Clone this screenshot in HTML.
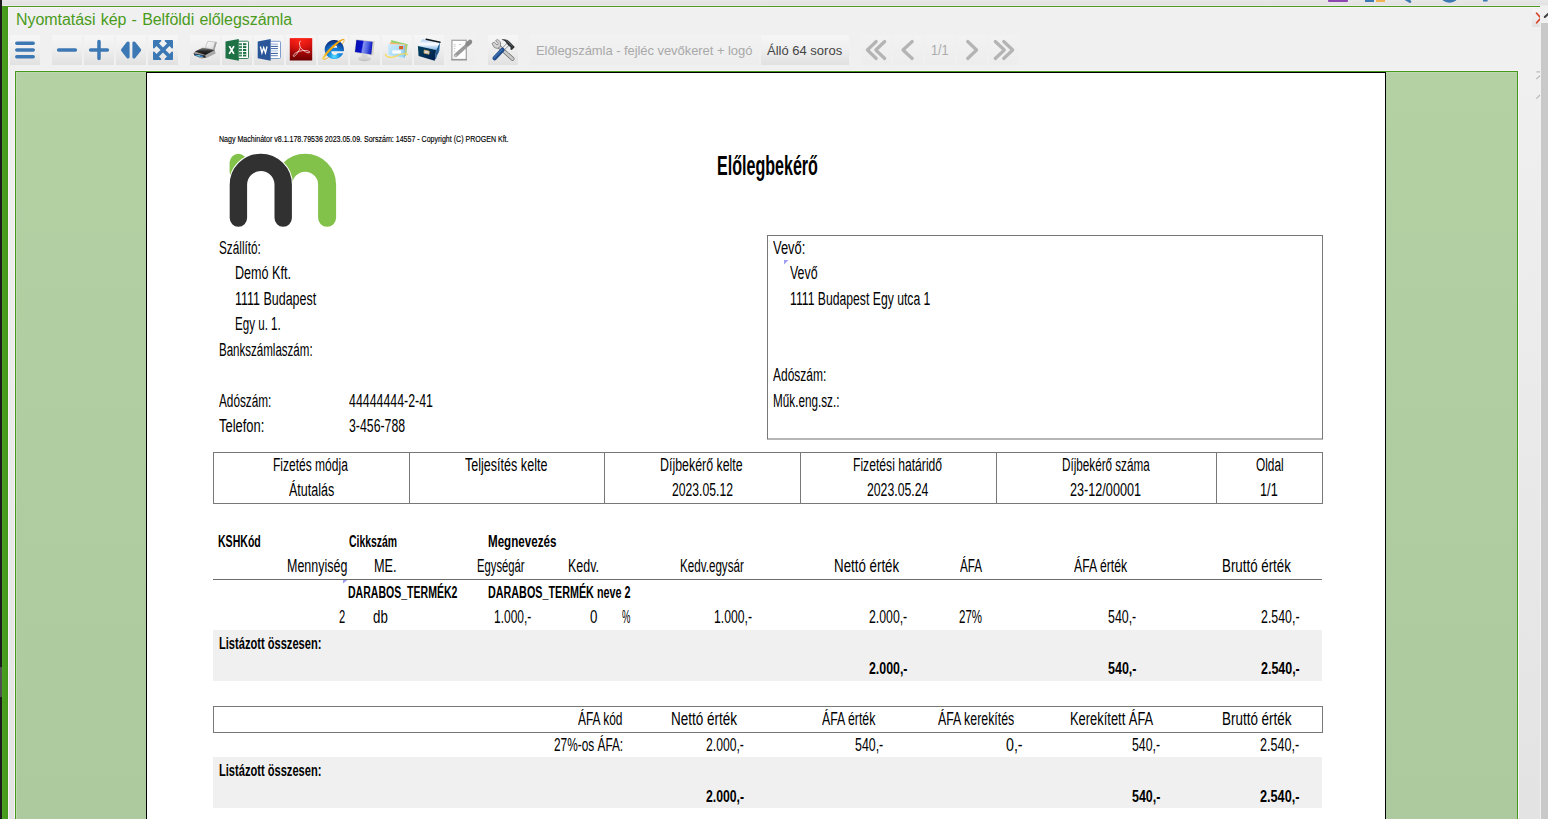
<!DOCTYPE html>
<html lang="hu"><head><meta charset="utf-8"><title>Nyomtatási kép - Belföldi előlegszámla</title>
<style>
html,body{margin:0;padding:0}
body{width:1548px;height:819px;overflow:hidden;position:relative;background:#f0f0f0;font-family:"Liberation Sans",sans-serif}
.a{position:absolute}
#topbar{left:0;top:0;width:1548px;height:6px;background:linear-gradient(#e8e8e8,#e2e2e2 80%,#f4f0f4)}
#lblack{left:0;top:0;width:2px;height:819px;background:#1c1c1c}
#lgrey{left:0;top:667px;width:2px;height:30px;background:#505050}
#lgreen{left:2px;top:6px;width:6px;height:813px;background:linear-gradient(90deg,#4ca522,#4a9c1e 20%,#489a1c 75%,#3d9613)}
#tgreen{left:2px;top:6px;width:1538px;height:1px;background:#4a9a1c}
#panel{left:8px;top:7px;width:1532px;height:812px;background:linear-gradient(#f0f0f0 0,#f0f0f0 64px,#e3e3e3 100%);box-shadow:inset 1px 1px 0 #f8f4f8}
#sbar{left:1541px;top:23px;width:7px;height:796px;background:#c9c9c9}
#sbtop{left:1540px;top:6px;width:8px;height:17px;background:#f0f0f0}
#title{left:16px;top:10px;font-size:16px;line-height:19px;color:#4b9b1d;white-space:nowrap;word-spacing:.9px;letter-spacing:-.06px}
.btn{position:absolute;top:35px;width:30px;height:30px;background:linear-gradient(#f6f6f6,#efefef 45%,#e1e1e1)}
.btn svg{position:absolute;left:0;top:0}
#lbl{left:536px;top:43px;font-size:13px;line-height:15px;color:#a9a9a9;white-space:nowrap;letter-spacing:-.06px}
#allo{left:761px;top:35px;width:88px;height:30px;background:linear-gradient(#f6f6f6,#efefef 45%,#e1e1e1)}
#allo span{position:absolute;left:6px;top:8px;font-size:13px;line-height:15px;color:#444;white-space:nowrap}
#pg{left:931.4px;top:42.6px;font-size:14px;line-height:15px;color:#ababab;transform:scaleX(.9);transform-origin:0 0}
#prevline{display:none}
#preview{left:15px;top:71px;width:1503px;height:748px;box-sizing:border-box;border:1px solid #45981a;border-bottom:none;background:linear-gradient(#b3d1a3,#adc99e);box-shadow:-1px -1px 0 #f8f3fa,1px -1px 0 #f8f3fa,inset 1px 1px 0 #bdd8af}
#page{left:146px;top:72px;width:1240px;height:747px;box-sizing:border-box;border:1px solid #000;border-bottom:none;background:#fff}
.box{position:absolute;box-sizing:border-box;border:1px solid #787878}
.vl{position:absolute;width:1px;background:#787878}
.band{position:absolute;background:#f0f0f0}
.fb{position:absolute;top:35px;height:30px;background:linear-gradient(#f2f2f2,#f0f0f0 45%,#ededed)}

.t{position:absolute;white-space:nowrap;font-family:"Liberation Sans",sans-serif;font-size:18px;line-height:18px;color:#000;transform-origin:0 0}
.t.b{font-weight:bold;font-size:16px;line-height:16px}
</style></head><body>
<div class="a" id="topbar"></div>
<div class="a" id="panel"></div>
<div class="a" id="lgreen"></div>
<div class="a" id="tgreen"></div>
<div class="a" id="lblack"></div>
<div class="a" id="lgrey"></div>
<div class="a" id="sbtop"></div>
<div class="a" id="sbar"></div>
<div class="a" id="title">Nyomtatási kép - Belföldi előlegszámla</div>
<div class="fb" style="left:530px;width:229px"></div>
<div class="fb" style="left:861px;width:30px"></div>
<div class="fb" style="left:893px;width:30px"></div>
<div class="fb" style="left:925px;width:30px"></div>
<div class="fb" style="left:957px;width:30px"></div>
<div class="fb" style="left:989px;width:30px"></div>
<!--TOOLBAR-->
<!-- group 1: blue vector icons -->
<div class="btn" style="left:10px"><svg width="30" height="30" viewBox="0 0 30 30"><g stroke="#3c78b4" stroke-width="3.5" stroke-linecap="round"><path d="M6.8 8.3H23.2M6.8 15H23.2M6.8 21.8H23.2"/></g></svg></div>
<div class="btn" style="left:52px"><svg width="30" height="30" viewBox="0 0 30 30"><path d="M6.6 15H23.4" stroke="#3c78b4" stroke-width="3.5" stroke-linecap="round"/></svg></div>
<div class="btn" style="left:84px"><svg width="30" height="30" viewBox="0 0 30 30"><path d="M6.6 15H23.4M15 6.6V23.4" stroke="#3c78b4" stroke-width="3.5" stroke-linecap="round"/></svg></div>
<div class="btn" style="left:116px"><svg width="30" height="30" viewBox="0 0 30 30"><g fill="#3c78b4" stroke="#3c78b4" stroke-width="3.2" stroke-linejoin="round"><path d="M6.6 15L12 8.1V21.9Z"/><path d="M23.6 15L18 8.1V21.9Z"/></g></svg></div>
<div class="btn" style="left:148px"><svg width="30" height="30" viewBox="0 0 30 30"><g fill="#3c78b4" stroke="#3c78b4" stroke-width="1.6" stroke-linejoin="round"><path d="M5.8 5.8H12.6L5.8 12.6Z"/><path d="M24.2 5.8H17.4L24.2 12.6Z"/><path d="M5.8 24.2H12.6L5.8 17.4Z"/><path d="M24.2 24.2H17.4L24.2 17.4Z"/></g><path d="M8 8L22 22M22 8L8 22" stroke="#3c78b4" stroke-width="3.6"/></svg></div>

<!-- printer -->
<div class="btn" style="left:190px"><svg width="30" height="30" viewBox="0 0 30 30"><defs><linearGradient id="pr1" x1="0" y1="0" x2="0" y2="1"><stop offset="0" stop-color="#8a8a8a"/><stop offset=".45" stop-color="#2a2a2a"/><stop offset="1" stop-color="#111"/></linearGradient><linearGradient id="pr2" x1="0" y1="0" x2="1" y2="1"><stop offset="0" stop-color="#fff"/><stop offset="1" stop-color="#d4d4d4"/></linearGradient></defs>
<path d="M17.8 6.3L26.6 7.2L23.4 14.6L15.2 12.6Z" fill="url(#pr2)" stroke="#b4b4b4" stroke-width=".7"/>
<path d="M24.9 7.3L26.7 7.4L24.6 14.9L22.9 14.5Z" fill="#a2a2a2"/><path d="M3.4 18.3L5.2 16.2L12.8 12.7L24.8 15.1L25.4 18.6L16.3 22.8L9 22.3L4.8 20.8Z" fill="#9a9a9a"/>
<path d="M5 16.4L12.8 12.8L24.6 15.1L15.5 20.1Z" fill="url(#pr1)"/>
<path d="M3.6 18.4L15.4 20.6L15.6 22.9L4.8 20.8Z" fill="#2b2b2b"/>
<path d="M5.4 19.4L12.9 20.7L12.6 22.2L5.2 20.8Z" fill="#3b8ee6"/><path d="M7.6 20L10.2 20.5L10 21.5L7.4 21Z" fill="#7fe0d0"/>
<path d="M15.6 20.3L24.9 15.4L25.4 18.6L16.3 22.8Z" fill="#a9a9a9"/><path d="M8.6 22.2L13 22.8L12.8 23.4L8.8 22.9Z" fill="#8d8d8d"/></svg></div>
<!-- excel -->
<div class="btn" style="left:222px"><svg width="30" height="30" viewBox="0 0 30 30"><rect x="15.5" y="6.2" width="11" height="17.3" rx="1" fill="#fff" stroke="#21734a" stroke-width=".9"/>
<g fill="#1e7145"><rect x="21" y="8.2" width="3.3" height="2"/><rect x="21" y="11.1" width="3.3" height="2"/><rect x="21" y="14" width="3.3" height="2"/><rect x="21" y="16.9" width="3.3" height="2"/><rect x="21" y="19.6" width="3.3" height="1.9"/></g>
<g fill="#3f8a62"><rect x="17" y="8.2" width="3" height="2"/><rect x="17" y="11.1" width="3" height="2"/><rect x="17" y="14" width="3" height="2"/><rect x="17" y="16.9" width="3" height="2"/><rect x="17" y="19.6" width="3" height="1.9"/></g>
<path d="M3.5 6.4L16.8 3.9V25.8L3.5 23.3Z" fill="#1e7145"/>
<path d="M7.3 11.1L11.9 18.9M12 11.1L7.2 18.9" stroke="#fff" stroke-width="1.7"/></svg></div>
<!-- word -->
<div class="btn" style="left:254px"><svg width="30" height="30" viewBox="0 0 30 30"><rect x="15.5" y="6.3" width="11" height="17.2" rx="1" fill="#fff" stroke="#7d9bcd" stroke-width="1"/>
<g stroke-width="1"><path d="M16.7 9.1H23.9" stroke="#8ba6d2"/><path d="M16.7 11.4H23.9" stroke="#2a5699"/><path d="M16.7 13.6H23.9" stroke="#3f68a8"/><path d="M16.7 15.9H23.9" stroke="#a9bde0"/><path d="M16.7 18.4H23.9" stroke="#2a5699"/><path d="M16.7 20.7H23.9" stroke="#5d80ba"/></g>
<path d="M3.7 6.4L16.7 3.9V25.8L3.7 23.3Z" fill="#2a5699"/>
<path d="M6.4 11.5L7.95 17.8L9.7 12.6L11.45 17.8L13 11.5" fill="none" stroke="#fff" stroke-width="1.35" stroke-linejoin="miter"/></svg></div>
<!-- pdf -->
<div class="btn" style="left:286px"><svg width="30" height="30" viewBox="0 0 30 30"><defs><linearGradient id="pd1" x1="0" y1="0" x2="0" y2="1"><stop offset="0" stop-color="#ea1010"/><stop offset=".5" stop-color="#b80a0a"/><stop offset="1" stop-color="#6c0000"/></linearGradient><radialGradient id="pd2" cx=".45" cy="0" r=".7"><stop offset="0" stop-color="#ff2a1a" stop-opacity=".9"/><stop offset="1" stop-color="#ff2a1a" stop-opacity="0"/></radialGradient></defs>
<rect x="3.8" y="3.2" width="22.4" height="22.3" fill="url(#pd1)"/><rect x="3.8" y="3.2" width="22.4" height="22.3" fill="url(#pd2)"/>
<path d="M14.9 6.4C12.9 5.4 13.4 9.8 14.3 12.4C13 16 9.6 21.6 7.6 21.4C6.2 20.6 9 17.6 13.2 16.3C17 15.1 22 15.2 23.6 16.7C24.4 18.2 21.4 18.2 19.4 16.8C17.2 15.2 15.2 13.6 14.3 12.4" fill="none" stroke="#fff" stroke-width=".8" stroke-opacity=".88"/></svg></div>
<!-- ie -->
<div class="btn" style="left:318px"><svg width="30" height="30" viewBox="0 0 30 30"><defs><radialGradient id="ie1" cx=".5" cy=".86" r=".9"><stop offset="0" stop-color="#5ce0ff"/><stop offset=".3" stop-color="#1690e4"/><stop offset=".62" stop-color="#0f62bc"/><stop offset=".88" stop-color="#0a3480"/><stop offset="1" stop-color="#06153f"/></radialGradient><linearGradient id="ie2" x1="0" y1="0" x2="1" y2="0"><stop offset="0" stop-color="#f7e36a"/><stop offset=".25" stop-color="#f3a90c"/><stop offset="1" stop-color="#eea212"/></linearGradient></defs>
<g transform="rotate(-43.5 15.6 14.4)"><ellipse cx="15.6" cy="14.4" rx="14.5" ry="2.9" fill="none" stroke="#eba51a" stroke-width=".7"/></g>
<circle cx="16.3" cy="14.5" r="9.3" fill="#f1efef"/><path d="M25.73 16.3A9.6 9.6 0 1 0 25.16 18.2H19.6A3.3 3 0 0 1 13.4 16.3ZM13.6 12.8A2.8 2.7 0 0 1 19.2 12.8Z" fill="url(#ie1)" fill-rule="evenodd"/>
<g transform="rotate(-43.5 15.6 14.4)"><path d="M.7 14.7A14.9 3.7 0 0 1 30.5 14.4A14.6 2.2 0 0 0 2.6 14.9A3 1.6 0 0 1 .7 14.7Z" fill="url(#ie2)"/></g></svg></div>
<!-- monitor -->
<div class="btn" style="left:350px"><svg width="30" height="30" viewBox="0 0 30 30"><defs><linearGradient id="mo1" x1="0" y1="0" x2="1" y2=".15"><stop offset="0" stop-color="#080ea8"/><stop offset=".44" stop-color="#0710cc"/><stop offset=".52" stop-color="#8492ec"/><stop offset=".78" stop-color="#4a5ee0"/><stop offset="1" stop-color="#0f1cc0"/></linearGradient><linearGradient id="mo2" x1="0" y1="0" x2="0" y2="1"><stop offset="0" stop-color="#e8e8e8"/><stop offset="1" stop-color="#bdbdbd"/></linearGradient></defs>
<ellipse cx="14.6" cy="23.5" rx="6.6" ry="2.8" fill="url(#mo2)"/><path d="M11.6 19L17.6 20.2L17.3 23H11.8Z" fill="#d4d4d4"/>
<path d="M6 4.2L23.3 6.2L24.6 6.1L23.4 20L21.7 20.6L4.3 17.5Z" fill="#d6d2c8"/>
<path d="M6.4 4.9L22.6 6.8L21.3 19.6L5 16.9Z" fill="url(#mo1)"/></svg></div>
<!-- mail -->
<div class="btn" style="left:382px"><svg width="30" height="30" viewBox="0 0 30 30"><defs><linearGradient id="ma1" x1="0" y1="0" x2="1" y2="1"><stop offset="0" stop-color="#cdeafc"/><stop offset="1" stop-color="#93d4f8"/></linearGradient></defs>
<path d="M9.1 5L25.6 9.3L24 20.9L9.1 17Z" fill="#93d472"/>
<path d="M7.8 7.2L24 9.5L22.9 21.7L7.8 18.6Z" fill="#f9b36f"/>
<path d="M6 9.3L22.7 9.9V22.9L6.2 20.2Z" fill="url(#ma1)" stroke="#d9f0fd" stroke-width=".5"/>
<path d="M22.3 10V22.8" stroke="#6fb0de" stroke-width=".8"/><rect x="17.1" y="11" width="4" height="3.3" rx=".5" fill="#e8521c"/><rect x="18.4" y="11.9" width="1.4" height="1.4" fill="#a8902a"/>
<rect x="10.3" y="15.3" width="8.7" height="3.3" fill="#fff" opacity=".92"/>
<path d="M3.4 19.2C4.6 22.6 9 23.2 14 21.2C18.5 19.3 23.4 17.2 25.6 19.6" fill="none" stroke="#f6d858" stroke-width="1.4" stroke-linecap="round" opacity=".9"/></svg></div>
<!-- archive -->
<div class="btn" style="left:414px"><svg width="30" height="30" viewBox="0 0 30 30"><defs><linearGradient id="ar1" x1="0" y1="0" x2="1" y2="1"><stop offset="0" stop-color="#00425f"/><stop offset="1" stop-color="#021d4c"/></linearGradient><linearGradient id="ar2" x1="0" y1="0" x2="0" y2="1"><stop offset="0" stop-color="#a9c9ee"/><stop offset=".45" stop-color="#fff"/><stop offset="1" stop-color="#7db4e6"/></linearGradient></defs>
<path d="M8.3 4.3L25.8 7L22.1 14.9L3.9 11Z" fill="url(#ar2)"/>
<path d="M12.2 4.3L26 7.2" stroke="#10181c" stroke-width="1.5" stroke-linecap="round"/>
<path d="M22.1 14.9L26.1 7.2L25.4 15.8L20.7 25.8Z" fill="#3f86cc"/><path d="M23.4 13.2L21.6 24M24.8 10.6L23.6 19" stroke="#0c2c44" stroke-width=".55"/>
<path d="M3.85 11L22.1 14.9L20.7 25.8L4.6 20.9Z" fill="url(#ar1)"/>
<path d="M10.2 15.1L15.2 16.2L15 19.2L10 18.1Z" fill="#d8d8dc" stroke="#dcae62" stroke-width=".8"/></svg></div>
<!-- edit (disabled) -->
<div class="btn" style="left:446px;background:linear-gradient(#f1f1f1,#eeeeee)"><svg width="30" height="30" viewBox="0 0 30 30"><rect x="5.9" y="5.3" width="14.4" height="19.2" fill="#fff" stroke="#a6a6a6" stroke-width="1.3"/><path d="M5.2 24.9H21" stroke="#8f8f8f" stroke-width="1"/>
<path d="M7.6 9.6H9.6M12.8 9.6H15M7.6 11.4H9.6M7.8 13.6H9.4M7.8 16.2H9.2" stroke="#b5b5b5" stroke-width=".7"/>
<path d="M24.2 7.4L9.6 20.4" stroke="#9a9a9a" stroke-width="3.6" stroke-linecap="round"/><path d="M24 6.8L21.6 8.9" stroke="#8a8a8a" stroke-width="4.4" stroke-linecap="round"/>
<path d="M9.8 19.2L6.6 22.9L11 21Z" fill="#c8c8c8"/></svg></div>
<!-- tools -->
<div class="btn" style="left:488px"><svg width="30" height="30" viewBox="0 0 30 30">
<path d="M10.6 11.2L24.4 23.8" stroke="#6d6d6d" stroke-width="4" stroke-linecap="round"/><path d="M10.6 11.2L24.4 23.8" stroke="#c9c9c9" stroke-width="2.6" stroke-linecap="round"/>
<path d="M4 8.6L6.2 7L9.2 10L10.4 8.8L7.6 5.6L9.6 4.4L12.6 7.2L12.4 11.4L9.6 13.4L6.4 12.6Z" fill="#d2d2d2" stroke="#777" stroke-width=".8" stroke-linejoin="round"/>
<path d="M20.6 8.8L13.6 15.8" stroke="#8a8a8a" stroke-width="3.4"/><path d="M20.6 8.8L13.6 15.8" stroke="#f4f4f4" stroke-width="2"/>
<path d="M14.6 14.8L6.6 23.2" stroke="#1f4d8c" stroke-width="4.2" stroke-linecap="round"/><path d="M14 14.6L6.2 22.6" stroke="#3c6cae" stroke-width="1.6" stroke-linecap="round"/>
<path d="M13.4 4.6C17.4 3.4 20.4 5.2 22.4 7.6L26.8 12L23.8 15L22.4 14.4L22.6 12.6L19 9C17.6 6.6 16 5.4 13.4 4.6Z" fill="#2e3134"/><path d="M18.4 5.4L24.6 11.4" stroke="#6a6e72" stroke-width=".9"/></svg></div>

<!-- nav arrows -->
<svg class="a" style="left:861px;top:35px" width="160" height="30" viewBox="0 0 160 30"><g fill="none" stroke="#b4b4b4" stroke-width="3.2" stroke-linecap="round" stroke-linejoin="round"><path d="M15.2 6.5L6.4 15L15.2 23.5M23.7 6.5L14.8 15L23.7 23.5"/><path d="M51.2 6.5L42 15L51.2 23.5"/><path d="M106.7 6.5L115.6 15L106.7 23.5"/><path d="M134.3 6.5L143.3 15L134.3 23.5M142.7 6.5L151.7 15L142.7 23.5"/></g></svg>

<div class="a" id="lbl">Előlegszámla - fejléc vevőkeret + logó</div>
<div class="a" id="allo"><span>Álló 64 soros</span></div>
<div class="a" id="pg">1/1</div>
<div class="a" id="preview"></div>
<div class="a" id="page"></div>
<svg class="a" style="left:225px;top:150px" width="116" height="82" viewBox="225 150 116 82"><g fill="none" stroke-linecap="round">
<path d="M238.4 162.6V172" stroke="#82c14a" stroke-width="17.6"/>
<path d="M283.2 184.7A21.95 21.95 0 0 1 327.1 184.7V217.8" stroke="#82c14a" stroke-width="18"/>
<path d="M238.4 218.1V184.8A22.4 22.4 0 0 1 283.2 184.8V218.1" stroke="#fff" stroke-width="19.6"/>
<path d="M238.4 218.1V184.8A22.4 22.4 0 0 1 283.2 184.8V218.1" stroke="#313131" stroke-width="17.4"/></g></svg>

<!-- customer box -->
<div class="box" style="left:767px;top:235px;width:556px;height:204px;border-bottom:none"></div>
<div class="a" style="left:767px;top:438px;width:556px;height:2px;background:rgba(120,120,120,.55)"></div>
<!-- table 1 -->
<div class="box" style="left:213px;top:452px;width:1110px;height:52px"></div>
<div class="vl" style="left:409px;top:452px;height:52px"></div>
<div class="vl" style="left:604px;top:452px;height:52px"></div>
<div class="vl" style="left:800px;top:452px;height:52px"></div>
<div class="vl" style="left:996px;top:452px;height:52px"></div>
<div class="vl" style="left:1216px;top:452px;height:52px"></div>
<!-- header rule -->
<div class="a" style="left:213px;top:579px;width:1109px;height:1px;background:#6c6c6c"></div>
<!-- bands -->
<div class="band" style="left:213px;top:630px;width:1109px;height:51px"></div>
<div class="band" style="left:213px;top:757px;width:1109px;height:51px"></div>
<!-- table 2 header -->
<div class="box" style="left:213px;top:706px;width:1110px;height:27px"></div>
<!-- fragments of the upper application toolbar -->
<div class="a" style="left:1328px;top:0;width:20px;height:2.4px;background:#8e47b0;border-radius:0 0 1px 1px"></div>
<div class="a" style="left:1365px;top:0;width:9px;height:2px;background:#3c78b4"></div>
<div class="a" style="left:1376px;top:0;width:9px;height:2px;background:#f0b352"></div>
<svg class="a" style="left:1400px;top:0" width="100" height="5" viewBox="1400 0 100 5"><path d="M1404.5 -1.6L1410 1.6" stroke="#3c78b4" stroke-width="2.6" stroke-linecap="round"/><path d="M1443 -2.6A6.5 4 0 0 0 1456 -2.6" fill="none" stroke="#3c78b4" stroke-width="2.6"/><path d="M1485.3 -1V1.5" stroke="#3c78b4" stroke-width="4.6"/></svg>
<!-- close button (clipped) -->
<div class="a" style="left:1532px;top:9px;width:8px;height:18px;background:linear-gradient(#f6f6f6,#efefef 45%,#e1e1e1)"></div>
<svg class="a" style="left:1532px;top:9px" width="8" height="18" viewBox="0 0 8 18"><path d="M4.6 4.2L9 9L4.6 13.8" fill="none" stroke="#d8432a" stroke-width="1.7" stroke-linecap="round"/></svg>
<!-- scrollbar arrow -->
<svg class="a" style="left:1541px;top:8px" width="7" height="14" viewBox="0 0 7 14"><path d="M3.8 9L8 5.2" fill="none" stroke="#404040" stroke-width="2" stroke-linecap="round"/></svg>
<!-- tiny clipped icons at right edge -->
<svg class="a" style="left:1534px;top:68px" width="6" height="36" viewBox="0 0 6 36"><g stroke="#b4b4b4" stroke-width="1.1" fill="none"><path d="M2.4 3.9H6"/><path d="M2.4 11L6 7.6"/><path d="M2.4 30.6L6 27"/></g></svg>
<!-- small marker ticks -->
<svg class="a" style="left:784px;top:260px" width="5" height="5"><path d="M0 0H4.4L0 4.4Z" fill="#9c9cf2"/></svg>
<svg class="a" style="left:343px;top:580px" width="5" height="4"><path d="M0 0H4.4L0 3.4Z" fill="#9c9cf2"/></svg>


<!-- document text -->
<div class="t" style="left:219.00px;top:238.8px;transform:scaleX(0.6537)">Szállító:</div>
<div class="t" style="left:234.80px;top:263.8px;transform:scaleX(0.6985)">Demó Kft.</div>
<div class="t" style="left:234.81px;top:289.8px;transform:scaleX(0.6934)">1111 Budapest</div>
<div class="t" style="left:234.86px;top:314.8px;transform:scaleX(0.6445)">Egy u. 1.</div>
<div class="t" style="left:218.66px;top:340.8px;transform:scaleX(0.6408)">Bankszámlaszám:</div>
<div class="t" style="left:219.30px;top:391.8px;transform:scaleX(0.6542)">Adószám:</div>
<div class="t" style="left:349.30px;top:391.8px;transform:scaleX(0.6880)">44444444-2-41</div>
<div class="t" style="left:219.30px;top:416.8px;transform:scaleX(0.7172)">Telefon:</div>
<div class="t" style="left:349.30px;top:416.8px;transform:scaleX(0.6837)">3-456-788</div>
<div class="t" style="left:773.00px;top:238.8px;transform:scaleX(0.7154)">Vevő:</div>
<div class="t" style="left:790.30px;top:263.8px;transform:scaleX(0.6871)">Vevő</div>
<div class="t" style="left:789.62px;top:289.8px;transform:scaleX(0.6777)">1111 Budapest Egy utca 1</div>
<div class="t" style="left:773.00px;top:365.8px;transform:scaleX(0.6656)">Adószám:</div>
<div class="t" style="left:773.15px;top:391.8px;transform:scaleX(0.6517)">Műk.eng.sz.:</div>
<div class="t" style="left:273.33px;top:456.1px;transform:scaleX(0.6677)">Fizetés módja</div>
<div class="t" style="left:288.80px;top:481.3px;transform:scaleX(0.6950)">Átutalás</div>
<div class="t" style="left:465.30px;top:456.1px;transform:scaleX(0.6980)">Teljesítés kelte</div>
<div class="t" style="left:660.31px;top:456.1px;transform:scaleX(0.6888)">Díjbekérő kelte</div>
<div class="t" style="left:671.50px;top:481.3px;transform:scaleX(0.6772)">2023.05.12</div>
<div class="t" style="left:853.13px;top:456.1px;transform:scaleX(0.6745)">Fizetési határidő</div>
<div class="t" style="left:867.05px;top:481.3px;transform:scaleX(0.6805)">2023.05.24</div>
<div class="t" style="left:1062.00px;top:456.1px;transform:scaleX(0.6494)">Díjbekérő száma</div>
<div class="t" style="left:1070.00px;top:481.3px;transform:scaleX(0.7024)">23-12/00001</div>
<div class="t" style="left:1255.50px;top:456.1px;transform:scaleX(0.6582)">Oldal</div>
<div class="t" style="left:1259.79px;top:481.3px;transform:scaleX(0.7080)">1/1</div>
<div class="t b" style="left:218.14px;top:533.6px;transform:scaleX(0.6592)">KSHKód</div>
<div class="t b" style="left:349.00px;top:533.6px;transform:scaleX(0.6522)">Cikkszám</div>
<div class="t b" style="left:487.77px;top:533.6px;transform:scaleX(0.7251)">Megnevezés</div>
<div class="t" style="left:286.91px;top:556.6px;transform:scaleX(0.6938)">Mennyiség</div>
<div class="t" style="left:373.59px;top:556.6px;transform:scaleX(0.7067)">ME.</div>
<div class="t" style="left:476.98px;top:556.8px;transform:scaleX(0.6249)">Egységár</div>
<div class="t" style="left:568.11px;top:556.8px;transform:scaleX(0.6910)">Kedv.</div>
<div class="t" style="left:680.35px;top:556.8px;transform:scaleX(0.6467)">Kedv.egysár</div>
<div class="t" style="left:833.66px;top:556.8px;transform:scaleX(0.7406)">Nettó érték</div>
<div class="t" style="left:959.60px;top:556.8px;transform:scaleX(0.6499)">ÁFA</div>
<div class="t" style="left:1073.80px;top:556.8px;transform:scaleX(0.6810)">ÁFA érték</div>
<div class="t" style="left:1222.16px;top:556.8px;transform:scaleX(0.7405)">Bruttó érték</div>
<div class="t b" style="left:348.34px;top:584.8px;transform:scaleX(0.6580)">DARABOS_TERMÉK2</div>
<div class="t b" style="left:487.83px;top:584.8px;transform:scaleX(0.6730)">DARABOS_TERMÉK neve 2</div>
<div class="t" style="left:339.00px;top:607.8px;transform:scaleX(0.6200)">2</div>
<div class="t" style="left:373.00px;top:607.8px;transform:scaleX(0.7396)">db</div>
<div class="t" style="left:494.34px;top:607.8px;transform:scaleX(0.6649)">1.000,-</div>
<div class="t" style="left:589.80px;top:607.8px;transform:scaleX(0.7400)">0</div>
<div class="t" style="left:621.90px;top:607.8px;transform:scaleX(0.5250)">%</div>
<div class="t" style="left:714.32px;top:607.8px;transform:scaleX(0.6776)">1.000,-</div>
<div class="t" style="left:869.00px;top:607.8px;transform:scaleX(0.6816)">2.000,-</div>
<div class="t" style="left:959.20px;top:607.8px;transform:scaleX(0.6385)">27%</div>
<div class="t" style="left:1108.30px;top:607.8px;transform:scaleX(0.6872)">540,-</div>
<div class="t" style="left:1260.80px;top:607.8px;transform:scaleX(0.6869)">2.540,-</div>
<div class="t b" style="left:218.71px;top:635.8px;transform:scaleX(0.6939)">Listázott összesen:</div>
<div class="t b" style="left:869.00px;top:660.8px;transform:scaleX(0.7720)">2.000,-</div>
<div class="t b" style="left:1108.30px;top:660.8px;transform:scaleX(0.7803)">540,-</div>
<div class="t b" style="left:1260.80px;top:660.8px;transform:scaleX(0.7780)">2.540,-</div>
<div class="t" style="left:578.20px;top:710.3px;transform:scaleX(0.6639)">ÁFA kód</div>
<div class="t" style="left:670.55px;top:710.3px;transform:scaleX(0.7497)">Nettó érték</div>
<div class="t" style="left:821.80px;top:710.3px;transform:scaleX(0.6835)">ÁFA érték</div>
<div class="t" style="left:938.40px;top:710.3px;transform:scaleX(0.6863)">ÁFA kerekítés</div>
<div class="t" style="left:1069.78px;top:710.3px;transform:scaleX(0.7171)">Kerekített ÁFA</div>
<div class="t" style="left:1222.05px;top:710.3px;transform:scaleX(0.7470)">Bruttó érték</div>
<div class="t" style="left:554.20px;top:736.2px;transform:scaleX(0.6584)">27%-os ÁFA:</div>
<div class="t" style="left:706.30px;top:736.2px;transform:scaleX(0.6745)">2.000,-</div>
<div class="t" style="left:855.40px;top:736.2px;transform:scaleX(0.6872)">540,-</div>
<div class="t" style="left:1006.20px;top:736.2px;transform:scaleX(0.7900)">0,-</div>
<div class="t" style="left:1131.90px;top:736.2px;transform:scaleX(0.6848)">540,-</div>
<div class="t" style="left:1260.10px;top:736.2px;transform:scaleX(0.6994)">2.540,-</div>
<div class="t b" style="left:218.71px;top:762.8px;transform:scaleX(0.6939)">Listázott összesen:</div>
<div class="t b" style="left:706.30px;top:789.3px;transform:scaleX(0.7639)">2.000,-</div>
<div class="t b" style="left:1131.90px;top:789.3px;transform:scaleX(0.7775)">540,-</div>
<div class="t b" style="left:1260.10px;top:789.3px;transform:scaleX(0.7922)">2.540,-</div>
<div class="t" style="font-size:8.5px;line-height:8.5px;-webkit-text-stroke:.15px #000;left:218.80px;top:134.8px;transform:scaleX(0.8292)">Nagy Machinátor v8.1.178.79536 2023.05.09. Sorszám: 14557 - Copyright (C) PROGEN Kft.</div>
<div class="t b" style="font-size:27px;line-height:27px;left:717.40px;top:153.3px;transform:scaleX(0.5950)">Előlegbekérő</div>
</body></html>
